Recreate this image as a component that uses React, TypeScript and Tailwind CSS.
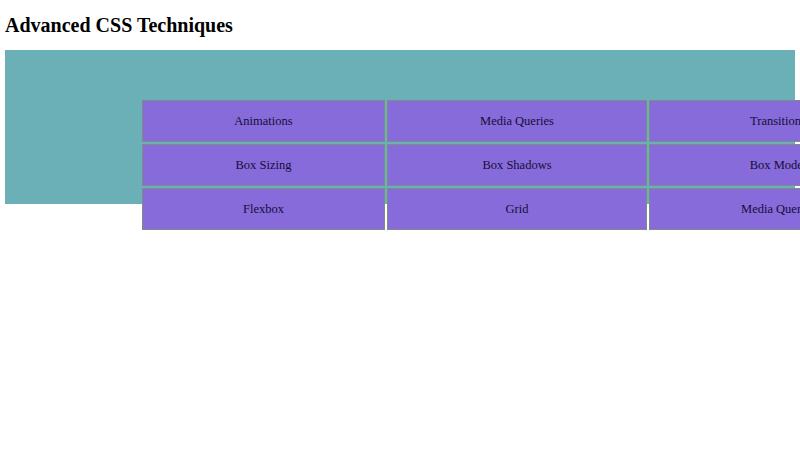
export default function App() {
  const rows = [
    ["Animations", "Media Queries", "Transitions"],
    ["Box Sizing", "Box Shadows", "Box Model"],
    ["Flexbox", "Grid", "Media Queries"],
  ];
  const widths = ["w-[243px]", "w-[260px]", "w-[258px]"];
  return (
    <div className="w-[800px] h-[450px] overflow-hidden bg-white text-black font-['Liberation_Serif','Times_New_Roman',serif]">
      <h1 className="ml-[5px] pt-[14px] text-[20px] leading-[22px] font-bold">Advanced CSS Techniques</h1>
      <div className="ml-[5px] mt-[14px] w-[790px] h-[154px] bg-[#6ab0b6] pt-[50px] pl-[137px]">
        <div className="flex flex-col gap-[2px] w-max">
          {rows.map((r, i) => (
            <div key={i} className="flex gap-[2px]">
              {r.map((t, j) => (
                <div
                  key={j}
                  className={`${widths[j]} h-[42px] shrink-0 flex items-center justify-center bg-[#876bdb] border border-[#7d8c86] text-[12.5px] leading-[14px] text-[#140e36]`}
                >
                  {t}
                </div>
              ))}
            </div>
          ))}
        </div>
      </div>
    </div>
  );
}
